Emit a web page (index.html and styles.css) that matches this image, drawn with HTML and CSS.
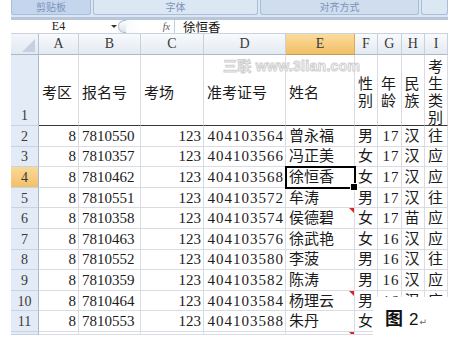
FILE: index.html
```html
<!DOCTYPE html>
<html lang="zh">
<head>
<meta charset="utf-8">
<title>Excel 考生名单</title>
<link rel="stylesheet" href="styles.css">
</head>
<body>
<div class="app">
  <div class="ribbon">
    <div class="grp g1"><span>剪贴板</span></div>
    <div class="grp g2"><span>字体</span></div>
    <div class="grp g3"><span>对齐方式</span></div>
    <div class="grp g4"></div>
  </div>
  <div class="fbar">
    <div class="namebox">E4</div>
    <div class="nbarrow"></div>
    <div class="fxbox"><span class="cap"></span><i>fx</i></div>
    <div class="finput">徐恒香</div>
  </div>
  <div class="sheet">
    <div class="corner"><span class="tri"></span></div>
    <div class="h">A</div><div class="h">B</div><div class="h">C</div><div class="h">D</div>
    <div class="h on">E</div><div class="h">F</div><div class="h">G</div><div class="h">H</div><div class="h">I</div>

    <div class="rh r1">1</div>
    <div class="c t1">考区</div><div class="c t1">报名号</div><div class="c t1">考场</div><div class="c t1">准考证号</div>
    <div class="c t1">姓名</div><div class="c t1 w"><span>性别</span></div><div class="c t1 w"><span>年龄</span></div>
    <div class="c t1 w"><span>民族</span></div><div class="c t1 w"><span>考生类别</span></div>

    <div class="rh">2</div>
    <div class="c n">8</div><div class="c">7810550</div><div class="c n">123</div><div class="c n d">404103564</div>
    <div class="c">曾永福</div><div class="c">男</div><div class="c n g">17</div><div class="c">汉</div><div class="c">往</div>

    <div class="rh">3</div>
    <div class="c n">8</div><div class="c">7810357</div><div class="c n">123</div><div class="c n d">404103566</div>
    <div class="c">冯正美</div><div class="c">女</div><div class="c n g">17</div><div class="c">汉</div><div class="c">应</div>

    <div class="rh on">4</div>
    <div class="c n">8</div><div class="c">7810462</div><div class="c n">123</div><div class="c n d">404103568</div>
    <div class="c sel">徐恒香</div><div class="c">女</div><div class="c n g">17</div><div class="c">汉</div><div class="c">应</div>

    <div class="rh">5</div>
    <div class="c n">8</div><div class="c">7810551</div><div class="c n">123</div><div class="c n d">404103572</div>
    <div class="c">牟涛</div><div class="c">男</div><div class="c n g">17</div><div class="c">汉</div><div class="c">往</div>

    <div class="rh">6</div>
    <div class="c n">8</div><div class="c">7810358</div><div class="c n">123</div><div class="c n d">404103574</div>
    <div class="c cm">侯德碧</div><div class="c">女</div><div class="c n g">17</div><div class="c">苗</div><div class="c">应</div>

    <div class="rh">7</div>
    <div class="c n">8</div><div class="c">7810463</div><div class="c n">123</div><div class="c n d">404103576</div>
    <div class="c">徐武艳</div><div class="c">女</div><div class="c n g">16</div><div class="c">汉</div><div class="c">应</div>

    <div class="rh">8</div>
    <div class="c n">8</div><div class="c">7810552</div><div class="c n">123</div><div class="c n d">404103580</div>
    <div class="c">李菠</div><div class="c">男</div><div class="c n g">16</div><div class="c">汉</div><div class="c">往</div>

    <div class="rh">9</div>
    <div class="c n">8</div><div class="c">7810359</div><div class="c n">123</div><div class="c n d">404103582</div>
    <div class="c">陈涛</div><div class="c">男</div><div class="c n g">16</div><div class="c">汉</div><div class="c">应</div>

    <div class="rh">10</div>
    <div class="c n">8</div><div class="c">7810464</div><div class="c n">123</div><div class="c n d">404103584</div>
    <div class="c cm">杨理云</div><div class="c">男</div><div class="c n g">16</div><div class="c">汉</div><div class="c">应</div>

    <div class="rh">11</div>
    <div class="c n">8</div><div class="c">7810553</div><div class="c n">123</div><div class="c n d">404103588</div>
    <div class="c">朱丹</div><div class="c">女</div><div class="c n g"></div><div class="c"></div><div class="c"></div>

    <div class="rh"></div>
    <div class="c"></div><div class="c"></div><div class="c"></div><div class="c"></div>
    <div class="c cm"></div><div class="c"></div><div class="c"></div><div class="c"></div><div class="c"></div>
  </div>
</div>
<div class="watermark">三联 www.3lian.com</div>
<div class="caption"><b>图</b><span class="num">2</span><span class="ret">↵</span></div>
</body>
</html>
```
FILE: styles.css
```css
* { box-sizing: border-box; margin: 0; padding: 0; }
html, body { background: #fff; }
body {
  width: 455px;
  height: 340px;
  position: relative;
  overflow: hidden;
  font-family: "Liberation Serif", "Noto Sans CJK SC", serif;
}
.app { margin-left: 11px; width: 437px; }

/* ribbon strip (group labels) */
.ribbon {
  height: 20px;
  display: flex;
  gap: 2px;
  background: linear-gradient(#dbe6f4 0, #dbe6f4 17px, #b7c6d9 17px);
}
.grp {
  height: 15px;
  background: #cbdaee;
  border: 1px solid #a9bdd8;
  border-top: none;
  border-radius: 0 0 3px 3px;
  display: flex;
  justify-content: center;
}
.grp span {
  font: 10px/12px "Noto Sans CJK SC", sans-serif;
  color: #7b93b8;
  margin-top: 1px;
}
.g1 { width: 80px; background: #c4d6ee; }
.g2 { width: 165px; background: #dce7f4; }
.g3 { width: 159px; background: #cfddef; }
.g4 { flex: 1; background: #dce7f4; }

/* formula bar */
.fbar {
  height: 14px;
  display: flex;
  align-items: stretch;
  background: #fff;
  border-bottom: 1px solid #c9d3df;
}
.namebox {
  width: 95px;
  text-align: center;
  font: 12px/13px "Liberation Serif", serif;
  color: #222;
}
.nbarrow {
  width: 12px;
  position: relative;
}
.nbarrow::after {
  content: "";
  position: absolute;
  left: 5px;
  top: 5px;
  border-left: 3px solid transparent;
  border-right: 3px solid transparent;
  border-top: 3px solid #333;
}
.fxbox {
  width: 57px;
  display: flex;
  align-items: center;
  justify-content: space-between;
  padding-right: 4px;
  background: linear-gradient(90deg, #f4f7fb, #fff 40%);
  border-right: 1px solid #c3ccd8;
}
.fxbox .cap {
  width: 8px;
  height: 13px;
  border: 1px solid #aeb9c8;
  border-right: none;
  border-radius: 7px 0 0 7px;
  background: linear-gradient(#fafcfe, #dfe5ee);
}
.fxbox i {
  font: italic 10px/13px "Liberation Serif", serif;
  color: #555;
}
.finput {
  flex: 1;
  padding-left: 8px;
  font: 12.5px/13px "Noto Sans CJK SC", sans-serif;
  color: #111;
}

/* sheet */
.sheet {
  display: grid;
  grid-template-columns: 28px 40px 62px 63px 82px 69px 23px 23.5px 23.5px 23px;
  grid-template-rows: 21px 71px repeat(10, 20.6px) 3px;
}
.corner {
  background: linear-gradient(#f3f6fa, #e2e9f2);
  border-right: 1px solid #b5c3d5;
  border-bottom: 1px solid #a9b9cd;
  position: relative;
}
.corner .tri {
  position: absolute;
  right: 3px;
  bottom: 2px;
  width: 0;
  height: 0;
  border-left: 13px solid transparent;
  border-bottom: 13px solid #c5d1e1;
}
.h {
  display: flex;
  align-items: center;
  justify-content: center;
  background: linear-gradient(#f8fafc, #e4eaf2);
  border-right: 1px solid #c8d1dc;
  border-bottom: 1px solid #a9b9cd;
  font-size: 14px;
  color: #3a3a3a;
}
.h.on {
  background: linear-gradient(#fbdc9e, #f1bf66);
  border-right-color: #dca955;
  border-bottom-color: #c89a4d;
}
.rh {
  display: flex;
  align-items: center;
  justify-content: center;
  background: #e3ebf6;
  border-right: 1px solid #a9b9cd;
  border-bottom: 1px solid #c6d3e3;
  font-size: 14px;
  color: #3a3a3a;
  padding-top: 2px;
}
.rh.r1 { align-items: flex-end; padding-bottom: 1px; }
.rh.on { background: linear-gradient(#fad998, #f2c06a); }

.c {
  position: relative;
  display: flex;
  align-items: center;
  padding: 0 3px;
  border-right: 1px solid #d9dde3;
  border-bottom: 1px solid #d9dde3;
  font-size: 15px;
  line-height: 18px;
  color: #1b1b1b;
  white-space: nowrap;
  overflow: hidden;
}
.c.n { justify-content: flex-end; padding-right: 2px; }
.c.d { letter-spacing: 1px; padding-right: 1px; }
.c.g { letter-spacing: 1px; padding-right: 1px; }
.c.t1 { border-bottom-color: #3a3a3a; padding-top: 5px; }
.c.w span { white-space: normal; word-break: break-all; line-height: 17px; width: 16px; }
.c.w { padding-left: 3px; padding-right: 1px; }

.sel { overflow: visible; z-index: 2; }
.sel::before {
  content: "";
  position: absolute;
  left: -1px;
  top: -1px;
  right: -2px;
  bottom: -2px;
  border: 2px solid #000;
}
.sel::after {
  content: "";
  position: absolute;
  right: -4px;
  bottom: -4px;
  width: 6px;
  height: 6px;
  background: #000;
  border: 1px solid #fff;
}
.cm::after {
  content: "";
  position: absolute;
  top: 0;
  right: 0;
  border-left: 5px solid transparent;
  border-top: 5px solid #d9262a;
}

/* overlays */
.watermark {
  position: absolute;
  left: 223px;
  top: 58px;
  font: bold 14px/16px "Liberation Sans", "Noto Sans CJK SC", sans-serif;
  color: #fff;
  -webkit-text-stroke: 1px #cfcfcf;
  letter-spacing: 0.3px;
}
.caption {
  position: absolute;
  left: 373px;
  top: 297px;
  right: 0;
  bottom: 0;
  background: #fff;
  padding: 10px 0 0 12px;
  display: flex;
  align-items: baseline;
  font: 17px/20px "Liberation Sans", sans-serif;
  color: #111;
}
.caption b {
  font: bold 18px/20px "Noto Sans CJK SC", sans-serif;
  margin-right: 6px;
}
.caption .ret {
  font: 9px "DejaVu Sans", sans-serif;
  color: #666;
  margin-left: 1px;
}
```
